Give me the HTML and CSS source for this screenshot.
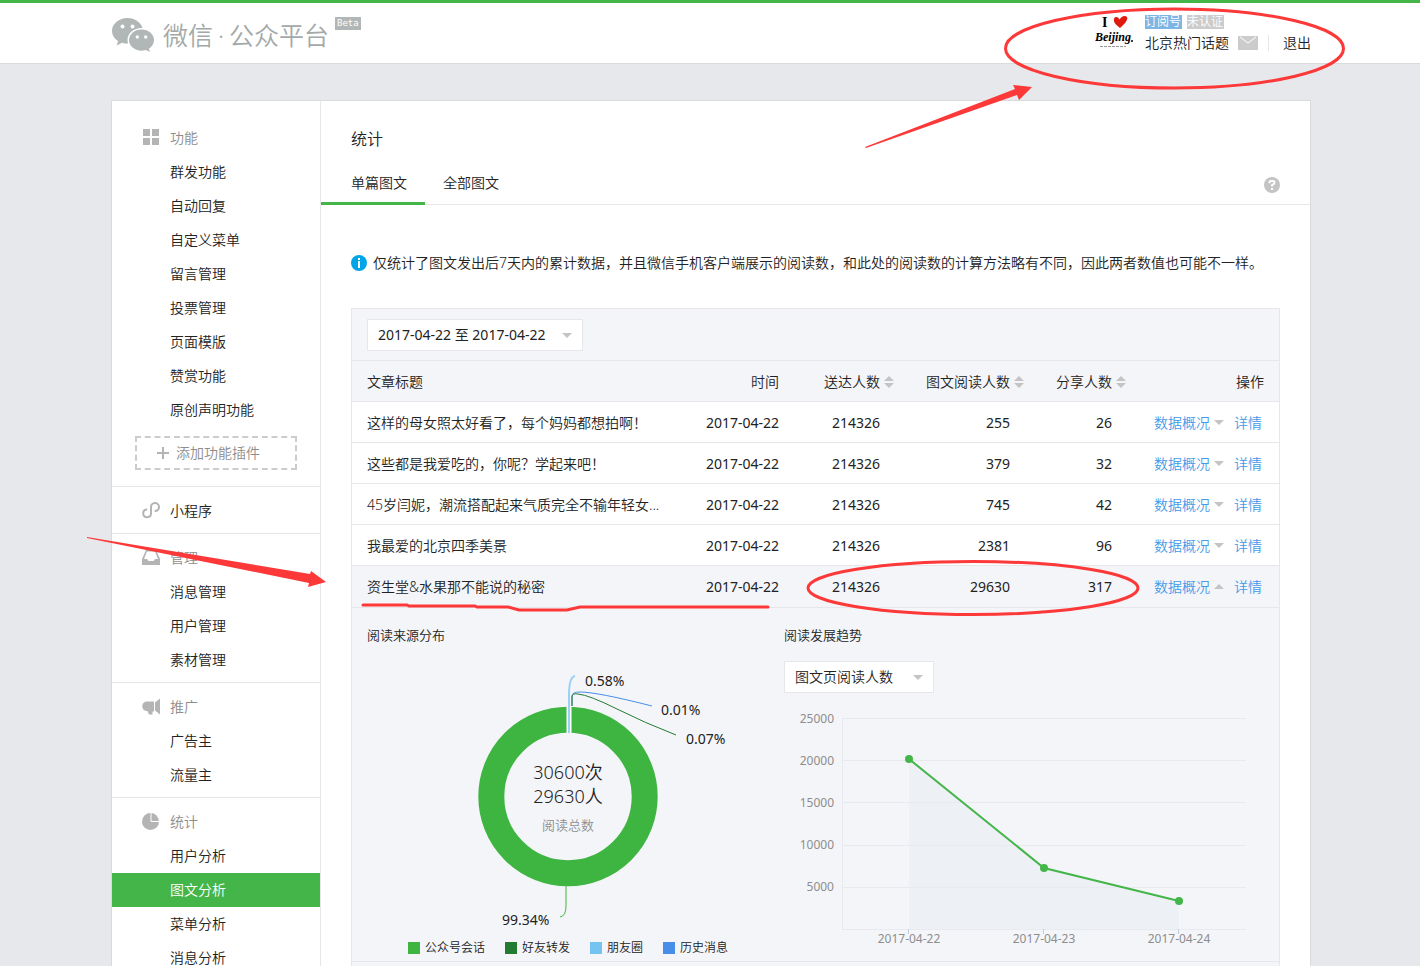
FILE: index.html
```html
<!DOCTYPE html>
<html lang="zh-CN">
<head>
    <meta charset="UTF-8">
    <title>微信公众平台</title>
    <link rel="stylesheet" href="styles.css">
</head>
<body>

    <header class="header">
        <div class="header-inner">
            <a class="logo" href="#">
                <svg class="logo-icon" width="43" height="36" viewBox="0 0 43 36">
                    <path fill="#b1b6b6" d="M15.500 1C7 1 0 6.600 0 14c0 4.200 2.300 7.700 6 10.100L4.800 28.500l5.200-2.700c2 .6 3.800.8 5.500.8C24 26.600 31 21 31 14S24 1 15.500 1z"/>
                    <ellipse cx="29.500" cy="23" rx="14" ry="12" fill="#fff"/>
                    <path fill="#b1b6b6" d="M29.500 12.500c-7 0-12.500 4.700-12.500 10.600s5.500 10.600 12.500 10.600c1.600 0 3-.2 4.400-.6l4 2-1-3.400c3.100-2 5.100-5 5.100-8.600 0-5.900-5.500-10.600-12.500-10.600z"/>
                    <g fill="#fff">
                        <circle cx="10.500" cy="9.500" r="2"/>
                        <circle cx="20.500" cy="9.500" r="2"/>
                        <circle cx="25.300" cy="20" r="1.700"/>
                        <circle cx="33.700" cy="20" r="1.700"/>
                    </g>
                </svg>
                <span class="logo-text">微信<span class="dot">·</span>公众平台</span>
                <span class="beta">Beta</span>
            </a>

            <div class="account">
                <svg class="avatar" width="38" height="34" viewBox="0 0 38 34">
                    <rect width="38" height="34" fill="#fcfcfc"/>
                    <text x="7" y="12" class="avatar-i">I</text>
                    <path fill="#e0190e" d="M25 13c-3-2.500-7-5.500-6-9 .8-2.800 4-2.500 5.500.5C26 2 29 0 31.500 1.500c2.500 2-1 7-6.500 11.500z"/>
                    <text x="0" y="26" class="avatar-name">Beijing</text>
                    <circle cx="37" cy="26" r="1"/>
                    <path d="M5 31.500h26" stroke="#999" stroke-dasharray="3 1"/>
                </svg>
                <div class="account-info">
                    <div class="badges">
                        <span class="badge badge-blue">订阅号</span>
                        <span class="badge">未认证</span>
                    </div>
                    <div class="account-row">
                        <a href="#">北京热门话题</a>
                        <a class="mail" href="#" aria-label="消息">
                            <svg width="20" height="14" viewBox="0 0 20 14">
                                <rect width="20" height="14" fill="#ccc"/>
                                <path d="M2 1l8 6 8-6" fill="none" stroke="#fff"/>
                            </svg>
                        </a>
                        <a class="logout" href="#">退出</a>
                    </div>
                </div>
            </div>
        </div>
    </header>

    <div class="page">
        <nav class="sidebar">
            <div class="menu menu-first">
                <div class="menu-title">
                    <svg width="18" height="18" viewBox="0 0 18 18">
                        <path fill="#b4b4b4" d="M1 0h7v7H1zM10 0h7v7h-7zM1 9h7v7H1zM10 9h7v7h-7z"/>
                    </svg>
                    功能
                </div>
                <a href="#">群发功能</a>
                <a href="#">自动回复</a>
                <a href="#">自定义菜单</a>
                <a href="#">留言管理</a>
                <a href="#">投票管理</a>
                <a href="#">页面模版</a>
                <a href="#">赞赏功能</a>
                <a href="#">原创声明功能</a>
                <button class="add-plugin" type="button">
                    <svg width="12" height="12" viewBox="0 0 12 12">
                        <path d="M6 0v12M0 6h12" stroke="#b4b4b4" stroke-width="2"/>
                    </svg>
                    添加功能插件
                </button>
            </div>

            <div class="menu">
                <div class="menu-title menu-dark">
                    <svg width="18" height="18" viewBox="0 0 18 18">
                        <path fill="none" stroke="#b4b4b4" stroke-width="2" stroke-linecap="round" d="M4.500 7.500A3.900 3.900 0 1 0 9 11.500V5A4 4 0 1 1 13.500 9"/>
                    </svg>
                    小程序
                </div>
            </div>

            <div class="menu">
                <div class="menu-title">
                    <svg width="18" height="18" viewBox="0 0 18 18">
                        <path fill="#b4b4b4" d="M0 10L4 1h10l4 9v6H0z"/>
                        <path fill="#fff" d="M5 2.500h8l3 7.500h-3l-1.500 2h-5L5 10H2z"/>
                    </svg>
                    管理
                </div>
                <a href="#">消息管理</a>
                <a href="#">用户管理</a>
                <a href="#">素材管理</a>
            </div>

            <div class="menu">
                <div class="menu-title">
                    <svg width="18" height="18" viewBox="0 0 18 18">
                        <path fill="#b4b4b4" d="M4 3.500h8v10h-1.500v3H7L5.500 13H4C-1 12-1 4.500 4 3.500zM13 4.500l5-4v16l-5-4z"/>
                    </svg>
                    推广
                </div>
                <a href="#">广告主</a>
                <a href="#">流量主</a>
            </div>

            <div class="menu">
                <div class="menu-title">
                    <svg width="18" height="18" viewBox="0 0 18 18">
                        <circle cx="8.500" cy="8.500" r="8.500" fill="#b4b4b4"/>
                        <path d="M9 0v8.500h9" fill="none" stroke="#fff"/>
                    </svg>
                    统计
                </div>
                <a href="#">用户分析</a>
                <a class="active" href="#">图文分析</a>
                <a href="#">菜单分析</a>
                <a href="#">消息分析</a>
            </div>
        </nav>

        <main class="main">
            <h2>统计</h2>
            <div class="tabs">
                <a class="tab selected" href="#">单篇图文</a>
                <a class="tab" href="#">全部图文</a>
                <a class="help" href="#" aria-label="帮助">
                    <svg width="16" height="16" viewBox="0 0 16 16">
                        <circle cx="8" cy="8" r="8" fill="#c4c4c4"/>
                        <path d="M5.500 6.300V5.200Q5.700 4 7 4h2q1.500 0 1.500 1.500T9 7.500 8 9v.5" fill="none" stroke="#fff" stroke-width="2"/>
                        <path d="M7 11h2v2H7z" fill="#fff"/>
                    </svg>
                </a>
            </div>

            <p class="tips">
                <svg width="16" height="16" viewBox="0 0 16 16">
                    <circle cx="8" cy="8" r="8" fill="#00a5e8"/>
                    <path d="M7 3h2v2H7zM7 6h2v7H7z" fill="#fff"/>
                </svg>
                仅统计了图文发出后7天内的累计数据，并且微信手机客户端展示的阅读数，和此处的阅读数的计算方法略有不同，因此两者数值也可能不一样。
            </p>

            <div class="card">
                <div class="toolbar">
                    <button class="date-range" type="button">2017-04-22 至 2017-04-22 <i class="caret"></i></button>
                </div>

                <table>
                    <thead>
                        <tr>
                            <th class="col-title">文章标题</th>
                            <th class="col-time">时间</th>
                            <th class="col-reach">送达人数<i class="sort"></i></th>
                            <th class="col-read">图文阅读人数<i class="sort"></i></th>
                            <th class="col-share">分享人数<i class="sort"></i></th>
                            <th class="col-action">操作</th>
                        </tr>
                    </thead>
                    <tbody>
                        <tr>
                            <td>这样的母女照太好看了，每个妈妈都想拍啊！</td>
                            <td class="date">2017-04-22</td>
                            <td class="num">214326</td>
                            <td class="num">255</td>
                            <td class="num">26</td>
                            <td><a href="#">数据概况<i class="caret"></i></a><a href="#">详情</a></td>
                        </tr>
                        <tr>
                            <td>这些都是我爱吃的，你呢？学起来吧！</td>
                            <td class="date">2017-04-22</td>
                            <td class="num">214326</td>
                            <td class="num">379</td>
                            <td class="num">32</td>
                            <td><a href="#">数据概况<i class="caret"></i></a><a href="#">详情</a></td>
                        </tr>
                        <tr>
                            <td>45岁闫妮，潮流搭配起来气质完全不输年轻女...</td>
                            <td class="date">2017-04-22</td>
                            <td class="num">214326</td>
                            <td class="num">745</td>
                            <td class="num">42</td>
                            <td><a href="#">数据概况<i class="caret"></i></a><a href="#">详情</a></td>
                        </tr>
                        <tr>
                            <td>我最爱的北京四季美景</td>
                            <td class="date">2017-04-22</td>
                            <td class="num">214326</td>
                            <td class="num">2381</td>
                            <td class="num">96</td>
                            <td><a href="#">数据概况<i class="caret"></i></a><a href="#">详情</a></td>
                        </tr>
                        <tr class="open">
                            <td>资生堂&amp;水果那不能说的秘密</td>
                            <td class="date">2017-04-22</td>
                            <td class="num">214326</td>
                            <td class="num">29630</td>
                            <td class="num">317</td>
                            <td><a href="#">数据概况<i class="caret up"></i></a><a href="#">详情</a></td>
                        </tr>
                    </tbody>
                </table>

                <div class="detail">
                    <section class="source">
                        <h3>阅读来源分布</h3>
                        <svg class="donut" width="417" height="290" viewBox="0 0 417 290">
                            <circle cx="201" cy="151.500" r="76.700" fill="none" stroke="#3eb541" stroke-width="26"/>
                            <path d="M202 61v27" stroke="#fff" stroke-width="5"/>
                            <path d="M202 88V50Q202 32 208 31" fill="none" stroke="#9bd2f3" stroke-width="2"/>
                            <path d="M205 61v-10q0-4 8-4Q230 47 285 61" fill="none" stroke="#488ee8"/>
                            <path d="M205 61v-9q0-4 6-3Q222 50 250 64T309 90" fill="none" stroke="#237b32"/>
                            <path d="M199 241v20q0 10-6 11" fill="none" stroke="#3eb541"/>
                            <g class="donut-label">
                                <text x="218" y="41">0.58%</text>
                                <text x="294" y="70">0.01%</text>
                                <text x="319" y="99">0.07%</text>
                                <text x="135" y="280">99.34%</text>
                            </g>
                            <text class="donut-total" x="201" y="134">30600次</text>
                            <text class="donut-total" x="201" y="158">29630人</text>
                            <text class="donut-caption" x="201" y="185">阅读总数</text>
                        </svg>
                        <ul class="legend">
                            <li><i class="green"></i>公众号会话</li>
                            <li><i class="dark"></i>好友转发</li>
                            <li><i class="sky"></i>朋友圈</li>
                            <li><i class="blue"></i>历史消息</li>
                        </ul>
                    </section>

                    <section class="trend">
                        <h3><label for="metric">阅读发展趋势</label></h3>
                        <div class="select">
                            <select id="metric">
                                <option>图文页阅读人数</option>
                            </select>
                            <i class="caret"></i>
                        </div>
                        <svg class="line-chart" width="480" height="268" viewBox="0 0 480 268">
                            <path d="M125 66L260 175L395 208V236H125z" fill="#edf0f5"/>
                            <path d="M58 25.500H462M58 67.500H462M58 109.500H462M58 152.500H462M58 194.500H462M58 236.500H462M58.500 25V236" stroke="#e8eaef"/>
                            <path d="M124.500 236v5M259.500 236v5M394.500 236v5" stroke="#c0d0e0"/>
                            <path d="M125 66L260 175L395 208" fill="none" stroke="#44b549" stroke-width="2"/>
                            <g fill="#44b549">
                                <circle cx="125" cy="66" r="4"/>
                                <circle cx="260" cy="175" r="4"/>
                                <circle cx="395" cy="208" r="4"/>
                            </g>
                            <g class="y-axis">
                                <text x="50" y="30">25000</text>
                                <text x="50" y="72">20000</text>
                                <text x="50" y="114">15000</text>
                                <text x="50" y="156">10000</text>
                                <text x="50" y="198">5000</text>
                            </g>
                            <g class="x-axis">
                                <text x="125" y="250">2017-04-22</text>
                                <text x="260" y="250">2017-04-23</text>
                                <text x="395" y="250">2017-04-24</text>
                            </g>
                        </svg>
                    </section>
                </div>
            </div>
        </main>
    </div>

    <!-- red pen marks -->
    <svg class="marks" width="1420" height="966" viewBox="0 0 1420 966">
        <g fill="none" stroke="#fd3838" stroke-width="3">
            <ellipse cx="1174.500" cy="48.500" rx="169" ry="39.500"/>
            <ellipse cx="973" cy="588" rx="165" ry="26.500"/>
            <path stroke-linecap="round" d="M363 605H407L409 606H475L477 607H508L519 610H567L580 607H768"/>
        </g>
        <path fill="#fd3838" d="M865 147L1015 89L1013 85L1032 87L1019 100L1017 95L866 148z"/>
        <path fill="#fd3838" d="M87 537L310 574L311 571L326 582L308 587L309 583L87 538z"/>
    </svg>

</body>
</html>
```

FILE: styles.css
```css
* {
    box-sizing: border-box;
}

body {
    position: relative;
    display: flex;
    flex-direction: column;
    height: 100vh;
    margin: 0;
    overflow: hidden;
    font-family: "Noto Sans", "Noto Sans CJK SC", sans-serif;
    font-size: 14px;
    font-weight: 350;
    line-height: 20px;
    color: #222;
    background-color: #e7e8eb;
}

a {
    color: inherit;
    text-decoration: none;
}

button, select {
    font: inherit;
    color: inherit;
}

svg {
    display: block;
}

/* header */
.header {
    flex: none;
    height: 64px;
    padding: 0 109px 0 111px;
    background: #fff;
    border-top: 3px solid #44b549;
    border-bottom: 1px solid #d9dadc;
}

.header-inner {
    display: flex;
    justify-content: space-between;
    max-width: 1200px;
    margin: 0 auto;
}

.logo {
    display: flex;
    padding: 14px 0 0 1px;
    color: #a3a9a9;
}

.logo-text {
    margin: 0 6px 0 8px;
    font-family: "Noto Sans CJK SC", sans-serif;
    font-size: 25px;
    font-weight: 350;
    line-height: 34px;
}

.dot {
    display: inline-block;
    width: 16px;
    font-family: "Noto Sans", sans-serif;
    line-height: 20px;
    text-align: center;
}

.beta {
    height: 13px;
    padding: 0 2px;
    font-family: "DejaVu Sans Mono", monospace;
    font-size: 9px;
    line-height: 13px;
    color: #fff;
    background: #b1b6b6;
}

.account {
    display: flex;
    gap: 12px;
    padding-top: 12px;
}

.avatar-i {
    font: bold 14px "Liberation Serif", serif;
}

.avatar-name {
    font: italic bold 12px "Liberation Serif", serif;
}

.badges {
    display: flex;
    gap: 5px;
    margin-bottom: 3px;
}

.badge {
    height: 14px;
    padding-right: 1px;
    font-size: 12px;
    line-height: 14px;
    color: #fff;
    background: #ccc;
}

.badge-blue {
    background: #7bb6e4;
}

.account-row {
    display: flex;
    align-items: center;
    height: 22px;
}

.mail {
    margin: 0 10px 0 9px;
}

.logout {
    padding-left: 14px;
    line-height: 16px;
    border-left: 1px solid #e7e7eb;
}

/* page */
.page {
    display: flex;
    flex: 1;
    width: 100%;
    max-width: 1420px;
    min-height: 0;
    margin: 0 auto;
    padding: 36px 109px 0 111px;
}

.sidebar {
    flex: none;
    width: 210px;
    background: #fff;
    border: 1px solid #d9dadc;
    border-right-color: #e7e7eb;
    border-bottom: 0;
}

.menu {
    padding: 7px 0 5px;
    border-top: 1px solid #e7e7eb;
}

.menu-first {
    padding-top: 20px;
    border-top: 0;
}

.menu-title {
    display: flex;
    align-items: center;
    gap: 10px;
    height: 34px;
    padding-left: 30px;
    color: #8d8d8d;
}

.menu-dark {
    color: #222;
}

.menu a {
    display: block;
    padding-left: 58px;
    line-height: 34px;
}

.menu .active {
    color: #fff;
    background: #44b549;
}

.add-plugin {
    display: flex;
    align-items: center;
    gap: 7px;
    width: 162px;
    height: 34px;
    margin: 9px 0 11px 23px;
    padding: 0 20px;
    color: #8d8d8d;
    background: none;
    border: 2px dashed #ccc;
}

.main {
    flex: 1;
    min-width: 0;
    background: #fff;
    border-top: 1px solid #d9dadc;
    border-right: 1px solid #d9dadc;
}

h2 {
    margin: 28px 30px 22px;
    font-size: 16px;
    font-weight: inherit;
    line-height: 20px;
}

.tabs {
    display: flex;
    height: 34px;
    border-bottom: 1px solid #e7e7eb;
}

.tab {
    height: 34px;
    padding: 2px 18px 0;
}

.selected {
    padding-left: 30px;
    border-bottom: 3px solid #44b549;
}

.help {
    margin: 6px 30px 0 auto;
}

.tips {
    display: flex;
    align-items: center;
    gap: 6px;
    margin: 48px 0 35px 30px;
    white-space: nowrap;
}

.card {
    margin: 0 30px;
    padding-bottom: 50px;
    background: #f4f5f9;
    border: 1px solid #e7e7eb;
}

.toolbar {
    padding: 10px 15px 9px;
    border-bottom: 1px solid #e7e7eb;
}

.date-range {
    display: flex;
    align-items: center;
    justify-content: space-between;
    width: 216px;
    height: 32px;
    padding: 0 10px;
    background: #fff;
    border: 1px solid #e7e7eb;
}

/* digits look too thin at the body weight */
.date-range, .date, .num, .donut-label, .y-axis, .x-axis {
    font-weight: 400;
}

.caret {
    display: inline-block;
    border: 5px solid transparent;
    border-top-color: #c4c4c4;
    border-bottom: 0;
}

.caret.up {
    border-top: 0;
    border-bottom: 5px solid #c4c4c4;
}

table {
    width: 100%;
    table-layout: fixed;
    border-spacing: 0;
}

th, td {
    height: 41px;
    padding: 1px 0 0;
    text-align: right;
    white-space: nowrap;
    border-bottom: 1px solid #e7e7eb;
}

th {
    font-weight: inherit;
}

tbody tr {
    background: #fff;
}

tbody .open {
    background: #f4f5f9;
}

.open td {
    height: 42px;
}

th:first-child, td:first-child {
    padding-left: 15px;
    text-align: left;
}

th:last-child {
    padding-right: 15px;
}

td:last-child {
    padding-right: 17px;
}

.num {
    padding-right: 14px;
}

.col-time {
    width: 100px;
}

.col-reach {
    width: 115px;
}

.col-read {
    width: 130px;
}

.col-share {
    width: 102px;
}

.col-action {
    width: 153px;
}

td a {
    margin-left: 10px;
    color: #459ae9;
}

td .caret {
    margin-left: 4px;
    vertical-align: 3px;
}

.sort {
    display: inline-block;
    width: 10px;
    height: 12px;
    margin-left: 4px;
    vertical-align: -1px;
}

.sort::before, .sort::after {
    content: "";
    display: block;
    border: 5px solid transparent;
    border-top: 0;
    border-bottom-color: #c4c4c4;
}

.sort::after {
    margin-top: 2px;
    border-top: 5px solid #c4c4c4;
    border-bottom: 0;
}

/* expanded row */
.detail {
    display: flex;
    padding: 17px 15px 0;
    border-bottom: 1px solid #e7e7eb;
}

.source {
    flex: none;
    width: 417px;
}

h3 {
    margin: 0;
    font-size: 13px;
    font-weight: inherit;
    line-height: 20px;
}

.donut-label {
    font-size: 14px;
    fill: #222;
}

.donut-total {
    font-size: 18px;
    fill: #222;
    text-anchor: middle;
}

.donut-caption {
    font-size: 13px;
    fill: #8d8d8d;
    text-anchor: middle;
}

.legend {
    display: flex;
    gap: 20px;
    margin: 0;
    padding: 3px 0 0 41px;
    font-size: 12px;
    list-style: none;
}

.legend li {
    display: flex;
    align-items: center;
    gap: 5px;
}

.legend i {
    width: 12px;
    height: 12px;
}

.green {
    background: #3eb541;
}

.dark {
    background: #237b32;
}

.sky {
    background: #74c3f0;
}

.blue {
    background: #488ee8;
}

.select {
    position: relative;
    width: 150px;
    margin-top: 16px;
}

.select select {
    display: block;
    width: 100%;
    height: 32px;
    padding: 0 10px;
    appearance: none;
    background: #fff;
    border: 1px solid #e7e7eb;
    border-radius: 0;
}

.select .caret {
    position: absolute;
    top: 14px;
    right: 11px;
    pointer-events: none;
}

.y-axis, .x-axis {
    font-size: 12px;
    fill: #8d8d8d;
    text-anchor: end;
}

.x-axis {
    text-anchor: middle;
}

.marks {
    position: absolute;
    top: 0;
    left: 0;
    pointer-events: none;
}
```
